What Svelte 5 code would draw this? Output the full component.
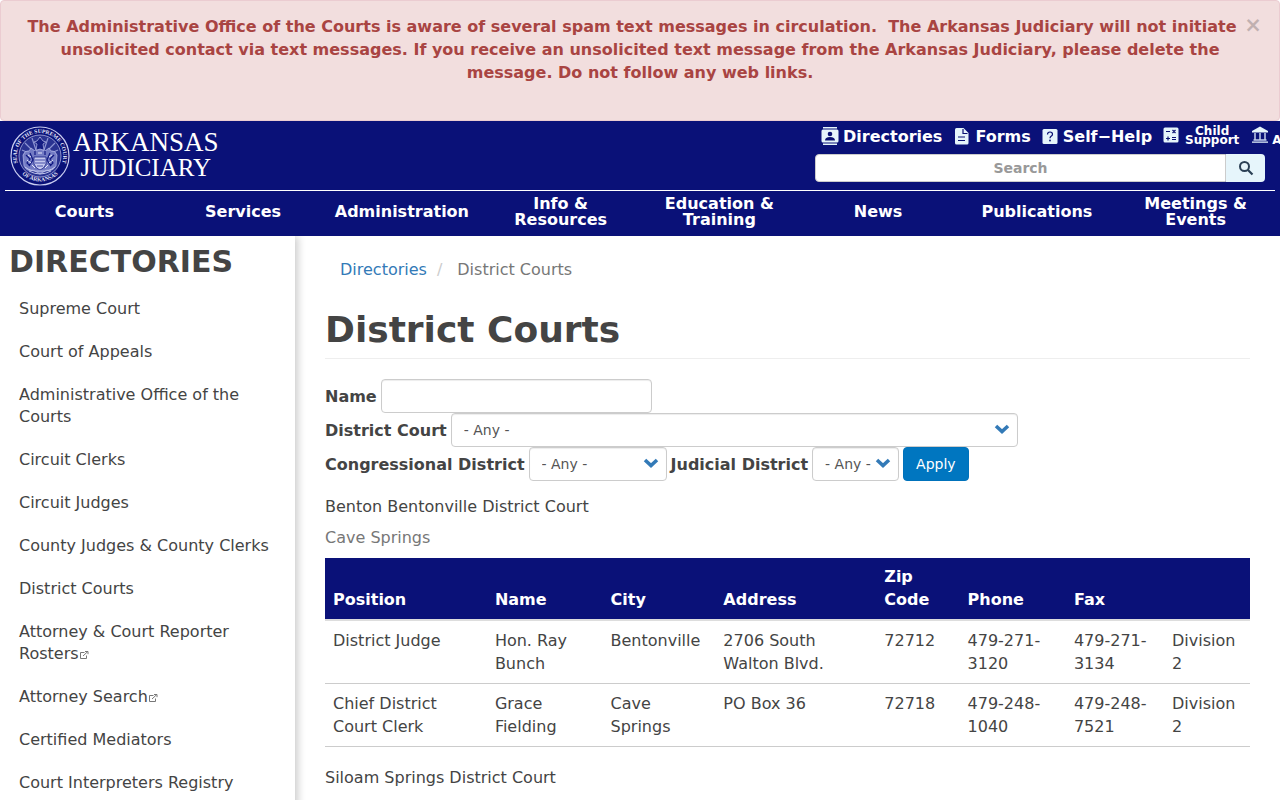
<script>
  let showAlert = true;
  let name = "";
  let search = "";

  const menu = [
    "Courts",
    "Services",
    "Administration",
    "Info & Resources",
    "Education & Training",
    "News",
    "Publications",
    "Meetings & Events",
  ];

  const directories = [
    { label: "Supreme Court" },
    { label: "Court of Appeals" },
    { label: "Administrative Office of the Courts" },
    { label: "Circuit Clerks" },
    { label: "Circuit Judges" },
    { label: "County Judges & County Clerks" },
    { label: "District Courts" },
    { label: "Attorney & Court Reporter Rosters", external: true },
    { label: "Attorney Search", external: true },
    { label: "Certified Mediators" },
    { label: "Court Interpreters Registry" },
  ];

  const columns = ["Position", "Name", "City", "Address", "Zip Code", "Phone", "Fax", ""];

  const rows = [
    ["District Judge", "Hon. Ray Bunch", "Bentonville", "2706 South Walton Blvd.", "72712", "479-271-3120", "479-271-3134", "Division 2"],
    ["Chief District Court Clerk", "Grace Fielding", "Cave Springs", "PO Box 36", "72718", "479-248-1040", "479-248-7521", "Division 2"],
  ];
</script>

{#if showAlert}
  <div class="alert" role="alert">
    <button class="close" aria-label="Close" on:click={() => (showAlert = false)}>×</button>
    <p>
      The Administrative Office of the Courts is aware of several spam text
      messages in circulation.&nbsp; The Arkansas Judiciary will not initiate
      unsolicited contact via text messages. If you receive an unsolicited text
      message from the Arkansas Judiciary, please delete the message. Do not
      follow any web links.
    </p>
  </div>
{/if}

<header>
  <div class="top">
    <a class="logo" href="#home">
      <svg class="seal" viewBox="0 0 60 60" width="60" height="60" aria-hidden="true">
        <defs>
          <path id="seal-top" d="M9.500 41 A23.200 23.200 0 1 1 50.500 41" />
          <path id="seal-bottom" d="M7 42 A26.500 26.500 0 0 0 53 42" />
        </defs>
        <circle cx="30" cy="30" r="29" fill="none" stroke="#c9cdf0" stroke-width="1.2" />
        <text font-size="5.6"><textPath href="#seal-top" startOffset="50%" text-anchor="middle">SEAL OF THE SUPREME COURT</textPath></text>
        <text font-size="5.6"><textPath href="#seal-bottom" startOffset="50%" text-anchor="middle">OF ARKANSAS</textPath></text>
        <circle cx="30" cy="30" r="21" fill="#2a3391" stroke="#bfc3ec" stroke-width="0.7" />
        <g stroke="#8e95d3" stroke-width="1.2">
          <path d="M30 24 L30 11 M26 24 L22 12 M34 24 L38 12 M23 25 L15 17 M37 25 L45 17 M21 28 L12 24 M39 28 L48 24" />
        </g>
        <path d="M27 15 l3 -4 3 4 3 1 -3 2 1 6 h-8 l1 -6 -3 -2z" fill="#151e83" stroke="#b9bdea" stroke-width="0.7" />
        <path d="M13 29 q2 -5 6 -4 l2 -3 4 3 5 -2 5 2 4 -3 2 3 q4 -1 6 4 l-1 11 q-4 6 -9 4 l-7 4 -7 -4 q-6 2 -9 -4z" fill="#737bc4" stroke="#b9bdea" stroke-width="0.7" />
        <path d="M16 29 l4 4 -3 4 3 3 M20 27 l3 7 -4 6 M44 29 l-4 4 3 4 -3 3 M40 27 l-3 7 4 6 M25 25 v4 M35 25 v4" fill="none" stroke="#101880" stroke-width="1.2" />
        <path d="M18 29 l3 2 M17 34 l4 3 M42 29 l-3 2 M43 34 l-4 3 M28 27 h4 M22 39 l3 3 M38 39 l-3 3" stroke="#e6e8fb" stroke-width="1" />
        <path d="M24 31 h12 v7 q-2 5 -6 6 q-4 -1 -6 -6z" fill="#c3c7ee" stroke="#151e83" stroke-width="0.8" />
        <path d="M25 34 h10 M25 37 h10 M27 40 h6" stroke="#3a43a0" stroke-width="0.9" />
        <path d="M15 41 q6 5 15 4 q9 1 15 -4 M19 45 q11 6 22 0" fill="none" stroke="#cfd2f3" stroke-width="0.9" />
      </svg>
      <span class="wordmark"><span>ARKANSAS</span><span class="second">JUDICIARY</span></span>
    </a>

    <div class="tools">
      <nav class="quick" aria-label="Quick links">
        <a class="directories" href="#directories">
          <svg viewBox="0 0 20 20" width="20" height="20" aria-hidden="true">
            <path d="M3 1h14v1.500H3z M3 17.500h14v1.500H3z M3 3.500h14q1.500 0 1.500 1.500v10q0 1.500-1.500 1.500H3q-1.500 0-1.500-1.500V5q0-1.500 1.500-1.500z" fill="#e6f5fb" />
            <circle cx="10" cy="8" r="2.300" fill="#0a1172" />
            <path d="M5 14.500q0-3.500 5-3.500t5 3.500z" fill="#0a1172" />
          </svg>
          Directories
        </a>
        <a class="forms" href="#forms">
          <svg viewBox="0 0 17 20" width="17" height="20" aria-hidden="true">
            <path d="M3.500 2h7l5 5v10q0 1.500-1.500 1.500h-10.500q-1.500 0-1.500-1.500V3.500q0-1.500 1.500-1.500z" fill="#e6f5fb" />
            <path d="M10 3v4.500h4.500 M5 11h7 M5 14.500h7" fill="none" stroke="#0a1172" stroke-width="1.200" />
          </svg>
          Forms
        </a>
        <a class="help" href="#self-help">
          <svg viewBox="0 0 16 20" width="16" height="20" aria-hidden="true">
            <rect x="0.500" y="3" width="15" height="15" rx="1.500" fill="#e6f5fb" />
            <path d="M5.500 8.500q0-2.500 2.500-2.500t2.500 2.200q0 1.200-1.400 2.100q-1.100.7-1.100 2" fill="none" stroke="#0a1172" stroke-width="1.200" />
            <circle cx="8" cy="14.500" r="0.900" fill="#0a1172" />
          </svg>
          Self−Help
        </a>
        <a class="support" href="#child-support">
          <svg viewBox="0 0 16 20" width="16" height="20" aria-hidden="true">
            <rect x="0.500" y="1.500" width="15" height="15" rx="1.500" fill="#e6f5fb" />
            <path d="M3 5.500h4 M9.500 4l3 3 M12.500 4l-3 3 M3 12.500h4 M5 10.500v4 M9 11.500h4 M9 13.500h4" stroke="#0a1172" stroke-width="1.200" />
          </svg>
          <span>Child Support</span>
        </a>
        <a class="court" href="#more">
          <svg viewBox="0 0 18 20" width="18" height="20" aria-hidden="true">
            <path d="M9 0.500l8 4.500v1.500H1V5z M1 15.500h16v1.200H1z" fill="#e6f5fb" />
            <path d="M4 7v7 M9 7v7 M14 7v7 M2.500 14h13" stroke="#c4d0ea" stroke-width="1.500" />
          </svg>
          <span>A</span>
        </a>
      </nav>
      <form class="search" on:submit|preventDefault>
        <input type="text" placeholder="Search" aria-label="Search" bind:value={search} />
        <button aria-label="Submit search">
          <svg viewBox="0 0 16 16" width="16" height="16" aria-hidden="true">
            <circle cx="6.500" cy="6.500" r="4.500" fill="none" stroke="#2b4055" stroke-width="2" />
            <path d="M10 10l4.500 4.500" stroke="#2b4055" stroke-width="2.200" />
          </svg>
        </button>
      </form>
    </div>
  </div>

  <nav class="menu" aria-label="Main">
    {#each menu as item}
      <a href="#menu"><span>{item}</span></a>
    {/each}
  </nav>
</header>

<div class="page">
  <aside>
    <h2>DIRECTORIES</h2>
    <ul>
      {#each directories as item}
        <li>
          <a href="#directory">{item.label}{#if item.external}<svg class="ext" viewBox="0 0 10 8" width="10" height="8" aria-label="(link is external)"><path d="M5.500 1.500H1.500V7.500H7.500V4.500 M4 5L8.500 0.800 M6 0.500h3v2.700" /></svg>{/if}</a>
        </li>
      {/each}
    </ul>
  </aside>

  <main>
    <ol class="breadcrumb">
      <li><a href="#directories">Directories</a></li>
      <li>District Courts</li>
    </ol>
    <h1>District Courts</h1>

    <form class="filters" on:submit|preventDefault>
      <div class="row">
        <label for="name">Name</label>
        <input id="name" class="name" type="text" bind:value={name} />
      </div>
      <div class="row">
        <label for="court">District Court</label>
        <span class="select wide">
          <select id="court"><option>- Any -</option></select>
          <svg viewBox="0 0 16 10" width="16" height="10" aria-hidden="true"><path d="M2 2l6 5.500L14 2" /></svg>
        </span>
      </div>
      <div class="row">
        <label for="congressional">Congressional District</label>
        <span class="select medium">
          <select id="congressional"><option>- Any -</option></select>
          <svg viewBox="0 0 16 10" width="16" height="10" aria-hidden="true"><path d="M2 2l6 5.500L14 2" /></svg>
        </span>
        <label for="judicial">Judicial District</label>
        <span class="select small">
          <select id="judicial"><option>- Any -</option></select>
          <svg viewBox="0 0 16 10" width="16" height="10" aria-hidden="true"><path d="M2 2l6 5.500L14 2" /></svg>
        </span>
        <button class="apply">Apply</button>
      </div>
    </form>

    <p class="court-name">Benton Bentonville District Court</p>
    <table>
      <caption>Cave Springs</caption>
      <colgroup>
        <col class="position" />
        <col class="person" />
        <col class="city" />
        <col class="address" />
        <col class="zip" />
        <col class="phone" />
        <col class="fax" />
        <col />
      </colgroup>
      <thead>
        <tr>
          {#each columns as column}
            <th scope="col">{column}</th>
          {/each}
        </tr>
      </thead>
      <tbody>
        {#each rows as row}
          <tr>
            {#each row as cell}
              <td>{cell}</td>
            {/each}
          </tr>
        {/each}
      </tbody>
    </table>
    <p class="court-name">Siloam Springs District Court</p>
  </main>
</div>

<style>
  :global(body) {
    font: 16px/23px "DejaVu Sans", sans-serif;
    color: #444;
    background: #fff;
    overflow: hidden;
  }
  :global(*) {
    box-sizing: border-box;
  }
  a {
    text-decoration: none;
    color: inherit;
  }
  input,
  select,
  button {
    font-family: inherit;
    margin: 0;
  }

  .alert {
    padding: 14px 20px 36px;
    border: 1px solid #ebccd1;
    border-radius: 4px;
    background: #f2dede;
    color: #a94442;
    font-weight: bold;
    text-align: center;
  }
  .alert p {
    margin: 0;
  }
  .close {
    float: right;
    width: 20px;
    height: 20px;
    margin-right: -4px;
    padding: 0;
    border: none;
    background: none;
    color: #000;
    opacity: 0.2;
    font-size: 21px;
    line-height: 20px;
    font-weight: bold;
  }

  header {
    padding: 0 5px;
    background: #0a1178;
    color: #fff;
    font-weight: bold;
    overflow: hidden;
  }
  .top {
    display: flex;
    justify-content: space-between;
    height: 70px;
    border-bottom: 1px solid #fff;
  }
  .logo {
    display: flex;
    gap: 3px;
    padding: 5px;
  }
  .seal text {
    fill: #e6e8fb;
    font-family: "Liberation Serif", serif;
    font-weight: bold;
  }
  .wordmark {
    display: flex;
    flex-direction: column;
    align-items: center;
    font-family: "Liberation Serif", serif;
    font-weight: normal;
    font-size: 27px;
    line-height: 26px;
    padding-top: 3px;
  }
  .second {
    font-size: 25px;
  }
  .tools {
    width: 460px;
    padding-right: 10px;
  }
  .quick {
    display: flex;
    height: 33px;
    padding: 2px 5px 0;
    white-space: nowrap;
  }
  .quick a {
    display: flex;
    flex: none;
    height: 26px;
    align-items: center;
    gap: 3px;
    margin-right: 11px;
  }
  .quick .forms,
  .quick .help,
  .quick .support {
    gap: 5px;
  }
  .quick .support span,
  .quick .court span {
    font-size: 12px;
    line-height: 9px;
    text-align: center;
  }
  .quick .support span {
    width: 56px;
    white-space: normal;
  }
  .quick .court span {
    padding-top: 9px;
  }
  .search {
    display: flex;
    height: 28px;
  }
  .search input {
    flex: 1;
    min-width: 0;
    border: 1px solid #ccc;
    border-radius: 4px 0 0 4px;
    font-size: 14px;
    font-weight: bold;
    text-align: center;
  }
  .search input::placeholder {
    color: #999;
  }
  .search button {
    display: flex;
    align-items: center;
    justify-content: center;
    width: 39px;
    padding: 0;
    border: none;
    border-radius: 0 4px 4px 0;
    background: #e6f5fb;
  }
  .menu {
    display: grid;
    grid-template-columns: repeat(8, minmax(0, 1fr));
    height: 45px;
    line-height: 16px;
    text-align: center;
  }
  .menu a {
    display: flex;
    align-items: center;
    justify-content: center;
    padding: 0 10px 4px;
  }

  .page {
    display: flex;
  }
  aside {
    flex: none;
    width: 295px;
    padding: 9px;
    box-shadow: 3px 0 8px rgba(0, 0, 0, 0.2);
    clip-path: inset(0 -12px 0 0);
  }
  h2 {
    margin: 0 0 10px;
    font-size: 30px;
    line-height: 33px;
  }
  aside ul {
    margin: 0;
    padding: 0;
    list-style: none;
  }
  aside li a {
    display: block;
    padding: 10px 10px 11px;
    line-height: 22px;
  }
  .ext {
    fill: none;
    stroke: #777;
    stroke-width: 1;
  }

  main {
    flex: 1;
    min-width: 0;
    padding: 22px 30px 0;
  }
  .breadcrumb {
    display: flex;
    margin: 0;
    padding: 0 15px;
    list-style: none;
    color: #777;
  }
  .breadcrumb a {
    color: #337ab7;
  }
  .breadcrumb li + li::before {
    content: "/";
    padding: 0 15px 0 10px;
    color: #ccc;
  }
  h1 {
    margin: 29px 0 20px;
    padding-bottom: 9px;
    border-bottom: 1px solid #eee;
    font-size: 36px;
    line-height: 39px;
  }
  .row {
    display: flex;
    align-items: center;
    gap: 4px;
  }
  label {
    font-weight: bold;
  }
  .name,
  select {
    height: 34px;
    border: 1px solid #ccc;
    border-radius: 4px;
    background: #fff;
    color: #555;
    font-size: 14px;
    box-shadow: inset 0 1px 1px rgba(0, 0, 0, 0.075);
  }
  .name {
    width: 271px;
    padding: 6px 12px;
  }
  .select {
    position: relative;
  }
  select {
    display: block;
    width: 100%;
    padding: 0 12px;
    appearance: none;
  }
  .select svg {
    position: absolute;
    top: 11px;
    right: 8px;
    fill: none;
    stroke: #337ab7;
    stroke-width: 3.6;
    pointer-events: none;
  }
  .wide {
    width: 567px;
  }
  .medium {
    width: 138px;
  }
  .small {
    width: 87px;
  }
  .apply {
    height: 34px;
    padding: 0 12px;
    border: 1px solid #0072bb;
    border-radius: 4px;
    background: #0076c0;
    color: #fff;
    font-size: 14px;
  }
  .court-name {
    margin: 14px 0 0;
  }
  table {
    width: 100%;
    margin-bottom: 19px;
    border-collapse: collapse;
    table-layout: fixed;
  }
  caption {
    padding: 8px 0 9px;
    color: #777;
    text-align: left;
  }
  th,
  td {
    padding: 8px;
    text-align: left;
  }
  th {
    padding-top: 7px;
    vertical-align: bottom;
    background: #0a1178;
    color: #fff;
    border-bottom: 2px solid #ddd;
  }
  td {
    vertical-align: top;
    border-bottom: 1px solid #ccc;
  }
  .position {
    width: 17.5%;
  }
  .person {
    width: 12.5%;
  }
  .city {
    width: 12.2%;
  }
  .address {
    width: 17.4%;
  }
  .zip {
    width: 9%;
  }
  .phone {
    width: 11.5%;
  }
  .fax {
    width: 10.6%;
  }
</style>
